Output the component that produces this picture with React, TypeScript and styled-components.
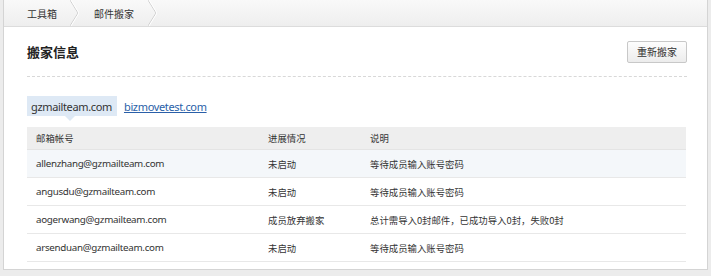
import React from "react";
import styled, { createGlobalStyle } from "styled-components";

const Global = createGlobalStyle`
  html, body { margin: 0; padding: 0; background: #ececec; }
  body { font-family: "Noto Sans", "Noto Sans CJK SC", sans-serif; color: #333; }
`;

const Page = styled.div`
  width: 711px;
  height: 276px;
  overflow: hidden;
  background: #ececec;
  padding: 0 3px 0 3px;
  box-sizing: border-box;
`;

const Frame = styled.div`
  border: 1px solid #d4d4d4;
  border-top: none;
  background: #fff;
  height: 270px;
  box-sizing: border-box;
  overflow: hidden;
`;

const Crumbs = styled.div`
  display: flex;
  align-items: stretch;
  height: 26px;
  background: linear-gradient(#f9f9f9, #eeeeee);
  border-bottom: 1px solid #dcdcdc;
  padding-left: 23px;
`;

const Crumb = styled.span<{ $pr: number }>`
  display: flex;
  align-items: center;
  font-family: "Noto Sans CJK SC", sans-serif;
  font-size: 10px;
  color: #333;
  padding-right: ${(p) => p.$pr}px;
`;

const Sep = styled.svg`
  width: 9px;
  height: 26px;
  flex: none;
  margin-right: 15px;
`;

const Content = styled.div`
  padding: 0 20px 0 23px;
`;

const Head = styled.div`
  display: flex;
  align-items: center;
  justify-content: space-between;
  height: 49px;
  border-bottom: 1px dashed #d8d8d8;
`;

const Title = styled.h2`
  margin: 0;
  font-family: "Noto Sans CJK SC", sans-serif;
  font-size: 13px;
  font-weight: bold;
  color: #222;
`;

const Button = styled.button`
  width: 60px;
  height: 22px;
  padding: 0;
  border: 1px solid #c8c8c8;
  border-radius: 2px;
  background: linear-gradient(#fdfdfd, #ececec);
  font-family: "Noto Sans CJK SC", sans-serif;
  font-size: 10px;
  color: #333;
`;

const Tabs = styled.div`
  display: flex;
  align-items: center;
  gap: 7px;
  margin-top: 19px;
  height: 20px;
`;

const Tab = styled.span<{ $active?: boolean }>`
  position: relative;
  display: flex;
  align-items: center;
  height: 20px;
  padding-left: ${(p) => (p.$active ? "4px" : "0")};
  padding-right: ${(p) => (p.$active ? "5px" : "0")};
  background: ${(p) => (p.$active ? "#dee9f5" : "transparent")};
  font-family: "Noto Sans", sans-serif;
  font-size: 11px;
  letter-spacing: -0.35px;
  color: ${(p) => (p.$active ? "#333" : "#2a5fa8")};
  text-decoration: ${(p) => (p.$active ? "none" : "underline")};
  &::after {
    content: "";
    display: ${(p) => (p.$active ? "block" : "none")};
    position: absolute;
    left: 38px;
    bottom: -5px;
    border-left: 5px solid transparent;
    border-right: 5px solid transparent;
    border-top: 5px solid #dee9f5;
  }
`;

const Table = styled.div`
  margin-top: 11px;
  width: 659px;
`;

const Row = styled.div<{ $head?: boolean; $hl?: boolean }>`
  display: grid;
  grid-template-columns: 232px 102px 1fr;
  align-items: center;
  height: ${(p) => (p.$head ? "23px" : "28px")};
  background: ${(p) => (p.$head ? "#eeeeee" : p.$hl ? "#f4f7fa" : "#fff")};
  border-bottom: 1px solid ${(p) => (p.$head ? "#e4e4e4" : "#e8e8e8")};
  box-sizing: border-box;
`;

const Cell = styled.span<{ $latin?: boolean }>`
  padding-left: 9px;
  font-family: ${(p) =>
    p.$latin ? `"Noto Sans", sans-serif` : `"Noto Sans CJK SC", sans-serif`};
  font-size: ${(p) => (p.$latin ? "9.8px" : "9.4px")};
  letter-spacing: ${(p) => (p.$latin ? "-0.3px" : "0")};
  color: #333;
  white-space: nowrap;
`;

const rows = [
  ["allenzhang@gzmailteam.com", "未启动", "等待成员输入账号密码"],
  ["angusdu@gzmailteam.com", "未启动", "等待成员输入账号密码"],
  ["aogerwang@gzmailteam.com", "成员放弃搬家", "总计需导入0封邮件，已成功导入0封，失败0封"],
  ["arsenduan@gzmailteam.com", "未启动", "等待成员输入账号密码"],
  ["binghuihe@gzmailteam.com", "未启动", "等待成员输入账号密码"],
];

const Chevron = () => (
  <Sep viewBox="0 0 9 26">
    <polyline points="0,0 8,13 0,26" fill="none" stroke="#cfcfcf" strokeWidth="1" />
    <polyline points="1,0 9,13 1,26" fill="none" stroke="#ffffff" strokeWidth="1" />
  </Sep>
);

export default function App() {
  return (
    <Page>
      <Global />
      <Frame>
        <Crumbs>
          <Crumb $pr={13}>工具箱</Crumb>
          <Chevron />
          <Crumb $pr={14}>邮件搬家</Crumb>
          <Chevron />
        </Crumbs>
        <Content>
          <Head>
            <Title>搬家信息</Title>
            <Button>重新搬家</Button>
          </Head>
          <Tabs>
            <Tab $active>gzmailteam.com</Tab>
            <Tab>bizmovetest.com</Tab>
          </Tabs>
          <Table>
            <Row $head>
              <Cell>邮箱帐号</Cell>
              <Cell>进展情况</Cell>
              <Cell>说明</Cell>
            </Row>
            {rows.map((r, i) => (
              <Row key={i} $hl={i === 0}>
                <Cell $latin>{r[0]}</Cell>
                <Cell>{r[1]}</Cell>
                <Cell>{r[2]}</Cell>
              </Row>
            ))}
          </Table>
        </Content>
      </Frame>
    </Page>
  );
}
